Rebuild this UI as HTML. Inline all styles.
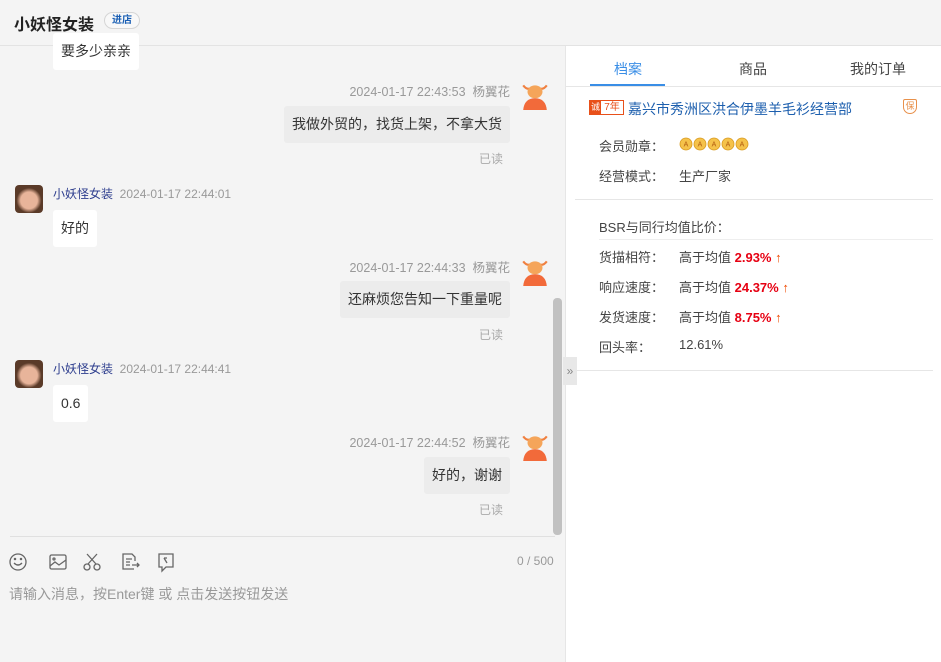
<!DOCTYPE html><html><head><meta charset="utf-8"><style>
*{margin:0;padding:0;box-sizing:border-box}
body{width:941px;height:662px;overflow:hidden;background:#f4f4f4;font-family:"Liberation Sans","Noto Sans CJK SC",sans-serif;font-size:13px;color:#333;position:relative}
.a{position:absolute;white-space:nowrap}
.bub{position:absolute;background:#fff;padding:0 8px;height:37px;line-height:37px;font-size:14px;border-radius:3px;white-space:nowrap}
.rb{background:#ececec;right:431px}
.meta{position:absolute;font-size:12.5px;color:#999;white-space:nowrap;right:431px}
.read{position:absolute;font-size:12px;color:#aaa}
.bull{position:absolute;width:30px;height:30px}
.av{position:absolute;width:28px;height:28px;border-radius:4px;background:radial-gradient(circle at 50% 55%,#e8b49a 0 40%,#5a3a28 60%);}
.red{color:#e60012;font-weight:bold}
.up{color:#f04a00;font-weight:bold}
</style></head><body>
<div class="a" style="left:0;top:0;width:941px;height:46px;border-bottom:1px solid #e3e3e3;background:#f4f4f4"></div>
<div class="a" style="left:14px;top:11px;font-size:16px;font-weight:bold;color:#222">小妖怪女装</div>
<div class="a" style="left:104px;top:12px;width:36px;height:17px;border:1px solid #d5d5d5;border-radius:9px;background:#f8f8f8;font-size:10px;color:#1a5fb4;text-align:center;line-height:15px;font-weight:bold">进店</div>

<div class="bub" style="left:53px;top:33px">要多少亲亲</div>

<div class="meta" style="top:81px">2024-01-17 22:43:53&nbsp;&nbsp;杨翼花</div>
<svg class="bull" style="left:520px;top:80px" viewBox="0 0 28 28"><path d="M3 5 Q6 9 9 8 M25 5 Q22 9 19 8" stroke="#f08040" stroke-width="2" fill="none"/><ellipse cx="14" cy="11" rx="7" ry="6" fill="#f5a55a"/><path d="M3 28 Q4 17 14 17 Q24 17 25 28Z" fill="#f26a3a"/></svg>
<div class="bub rb" style="top:106px">我做外贸的，找货上架，不拿大货</div>
<div class="read" style="left:479px;top:150px">已读</div>

<div class="av" style="left:15px;top:185px"></div>
<div class="a" style="left:53px;top:185px;font-size:12px;color:#2e3e8e">小妖怪女装&nbsp;&nbsp;<span style="color:#999">2024-01-17 22:44:01</span></div>
<div class="bub" style="left:53px;top:210px">好的</div>

<div class="meta" style="top:257px">2024-01-17 22:44:33&nbsp;&nbsp;杨翼花</div>
<svg class="bull" style="left:520px;top:256px" viewBox="0 0 28 28"><path d="M3 5 Q6 9 9 8 M25 5 Q22 9 19 8" stroke="#f08040" stroke-width="2" fill="none"/><ellipse cx="14" cy="11" rx="7" ry="6" fill="#f5a55a"/><path d="M3 28 Q4 17 14 17 Q24 17 25 28Z" fill="#f26a3a"/></svg>
<div class="bub rb" style="top:281px">还麻烦您告知一下重量呢</div>
<div class="read" style="left:479px;top:326px">已读</div>

<div class="av" style="left:15px;top:360px"></div>
<div class="a" style="left:53px;top:360px;font-size:12px;color:#2e3e8e">小妖怪女装&nbsp;&nbsp;<span style="color:#999">2024-01-17 22:44:41</span></div>
<div class="bub" style="left:53px;top:385px">0.6</div>

<div class="meta" style="top:432px">2024-01-17 22:44:52&nbsp;&nbsp;杨翼花</div>
<svg class="bull" style="left:520px;top:431px" viewBox="0 0 28 28"><path d="M3 5 Q6 9 9 8 M25 5 Q22 9 19 8" stroke="#f08040" stroke-width="2" fill="none"/><ellipse cx="14" cy="11" rx="7" ry="6" fill="#f5a55a"/><path d="M3 28 Q4 17 14 17 Q24 17 25 28Z" fill="#f26a3a"/></svg>
<div class="bub rb" style="top:457px">好的，谢谢</div>
<div class="read" style="left:479px;top:501px">已读</div>

<div class="a" style="left:553px;top:298px;width:9px;height:237px;background:#c1c1c1;border-radius:4px"></div>

<div class="a" style="left:10px;top:536px;width:545px;border-top:1px solid #e0e0e0"></div>
<svg class="a" style="left:8px;top:551px" width="170" height="22" viewBox="0 0 170 22" fill="none" stroke="#666" stroke-width="1.3">
<circle cx="10" cy="11" r="8"/><path d="M6 12 Q10 16 14 12"/><circle cx="7" cy="8" r=".6"/><circle cx="13" cy="8" r=".6"/>
<rect x="42" y="4" width="16" height="14" rx="1.5"/><path d="M42 15 L47 11 L51 14 L58 9"/><circle cx="46" cy="8" r="1"/>
<circle cx="79" cy="16" r="3"/><circle cx="89" cy="16" r="3"/><path d="M80 13 L89 3 M88 13 L79 3"/>
<path d="M126 18 H115 V3 H124 L127 6 V10 M118 8 H124 M118 11 H122 M118 14 H122 M124 14 H131 M129 12 L131 14 L129 16"/>
<path d="M151 3 H165 V16 H158 L154 20 V16 H151Z M156 7 L159 12 M156 7 H159"/>
</svg>
<div class="a" style="left:517px;top:554px;font-size:12px;color:#999">0 / 500</div>
<div class="a" style="left:9px;top:584px;font-size:14px;color:#999">请输入消息，按Enter键 或 点击发送按钮发送</div>

<div class="a" style="left:565px;top:46px;width:376px;height:616px;background:#fff;border-left:1px solid #e6e6e6"></div>
<div class="a" style="left:563px;top:357px;width:14px;height:28px;background:#e8e8e8;color:#888;font-size:12px;line-height:28px;text-align:center">»</div>
<div class="a" style="left:565px;top:86px;width:376px;border-top:1px solid #e6e6e6"></div>
<div class="a" style="left:614px;top:59px;font-size:14px;color:#3a8ee6">档案</div>
<div class="a" style="left:590px;top:84px;width:75px;height:2px;background:#3a8ee6"></div>
<div class="a" style="left:739px;top:59px;font-size:14px;color:#444">商品</div>
<div class="a" style="left:850px;top:59px;font-size:14px;color:#444">我的订单</div>

<div class="a" style="left:589px;top:100px;width:35px;height:15px;border:1px solid #e8501a;display:flex;overflow:hidden"><div style="width:11px;height:13px;background:#e8501a;color:#fff;font-size:9px;line-height:13px;text-align:center">诚</div><div style="flex:1;font-size:10px;line-height:13px;color:#e8501a;text-align:center">7年</div></div>
<div class="a" style="left:628px;top:99px;font-size:14px;color:#1d5fae">嘉兴市秀洲区洪合伊墨羊毛衫经营部</div>
<div class="a" style="left:903px;top:99px;width:14px;height:15px;border:1px solid #e8904a;border-radius:2px 2px 7px 7px;font-size:9px;color:#e8904a;text-align:center;line-height:13px;overflow:hidden">保</div>

<div class="a" style="left:599px;top:136px;color:#444">会员勋章：</div>
<div class="a" style="left:679px;top:136px;font-size:0">
<svg width="72" height="16" viewBox="0 0 72 16"><g fill="#f5c24a" stroke="#d89a20" stroke-width=".8"><circle cx="7" cy="8" r="6"/><circle cx="21" cy="8" r="6"/><circle cx="35" cy="8" r="6"/><circle cx="49" cy="8" r="6"/><circle cx="63" cy="8" r="6"/></g><g fill="#b05a10" font-size="7" font-family="Liberation Sans" text-anchor="middle"><text x="7" y="10.5">A</text><text x="21" y="10.5">A</text><text x="35" y="10.5">A</text><text x="49" y="10.5">A</text><text x="63" y="10.5">A</text></g></svg></div>
<div class="a" style="left:599px;top:166px;color:#444">经营模式：</div>
<div class="a" style="left:679px;top:166px;color:#444">生产厂家</div>
<div class="a" style="left:575px;top:199px;width:358px;border-top:1px solid #e6e6e6"></div>

<div class="a" style="left:599px;top:217px;color:#444">BSR与同行均值比价：</div>
<div class="a" style="left:599px;top:239px;width:334px;border-top:1px solid #eee"></div>
<div class="a" style="left:599px;top:247px;color:#444">货描相符：</div>
<div class="a" style="left:679px;top:247px;color:#444">高于均值 <span class="red">2.93%</span> <span class="up">↑</span></div>
<div class="a" style="left:599px;top:277px;color:#444">响应速度：</div>
<div class="a" style="left:679px;top:277px;color:#444">高于均值 <span class="red">24.37%</span> <span class="up">↑</span></div>
<div class="a" style="left:599px;top:307px;color:#444">发货速度：</div>
<div class="a" style="left:679px;top:307px;color:#444">高于均值 <span class="red">8.75%</span> <span class="up">↑</span></div>
<div class="a" style="left:599px;top:337px;color:#444">回头率：</div>
<div class="a" style="left:679px;top:337px;color:#444">12.61%</div>
<div class="a" style="left:575px;top:370px;width:358px;border-top:1px solid #e6e6e6"></div>
</body></html>
